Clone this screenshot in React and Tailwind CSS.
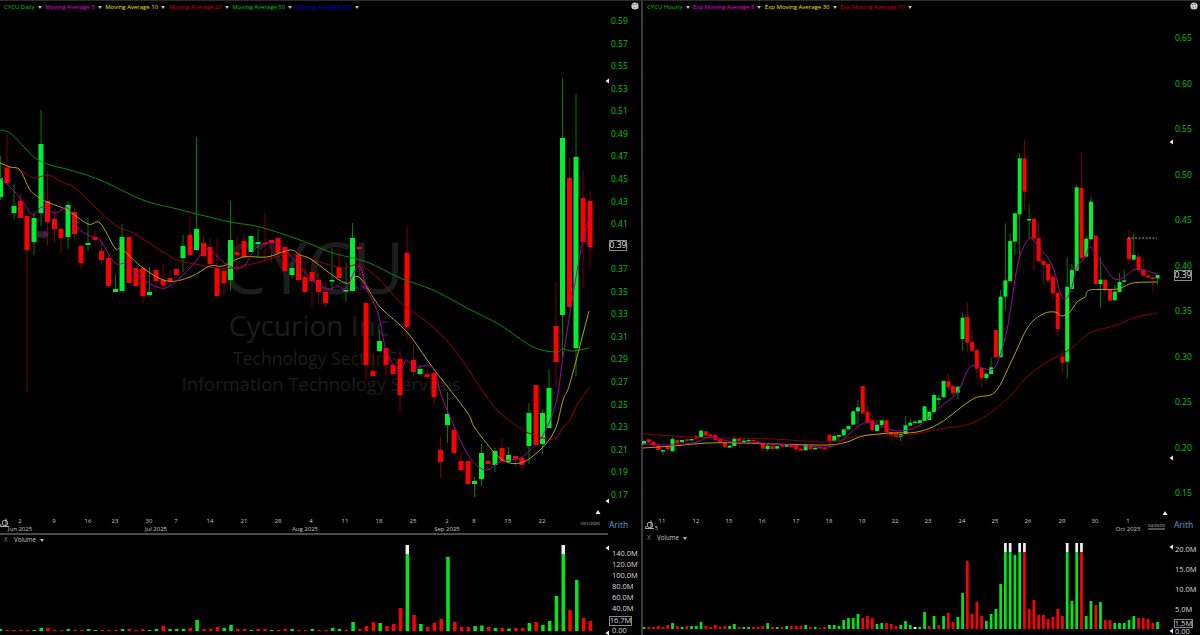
// CYCU daily / hourly chart layout

const UP = "#00f030";
const DOWN = "#ff0000";
const UP_WICK = "#007a00";
const DOWN_WICK = "#7a0000";

// [x, high, bodyTop, bodyBottom, low, colour]
const dailyCandles = [
  [0.5, 156, 178, 197, 200, "g"], [7, 135, 168, 183, 183, "r"], [14, 184, 206, 213, 220, "g"], [20.5, 194, 201, 218, 218, "r"],
  [27, 212, 216, 250, 393, "r"], [34, 212, 218, 242, 255, "g"], [41, 110, 144, 213, 226, "g"], [47.5, 171, 201, 222, 245, "r"],
  [54.5, 210, 219, 229, 243, "r"], [61, 227, 229, 238, 254, "r"], [68, 201, 205, 237, 249, "g"], [74.5, 207, 212, 234, 240, "r"],
  [81, 246, 246, 263, 269, "r"], [88, 218, 243, 245, 251, "g"], [95, 230, 237, 240, 246, "r"], [101.5, 243, 251, 260, 265, "r"],
  [108.5, 253, 258, 286, 286, "r"], [115.5, 274, 289, 292, 292, "g"], [122, 224, 237, 291, 291, "g"], [129, 237, 237, 283, 283, "r"],
  [136, 268, 268, 286, 286, "r"], [143, 267, 268, 296, 303, "r"], [149.5, 267, 292, 295, 295, "g"], [156, 268, 270, 281, 292, "r"],
  [163, 263, 280, 285, 290, "r"], [170, 270, 278, 281, 286, "r"], [176.5, 269, 269, 275, 275, "r"], [183, 235, 246, 258, 272, "g"],
  [190, 214, 235, 255, 255, "r"], [196.5, 137, 229, 250, 250, "g"], [203.5, 235, 243, 256, 257, "r"], [210, 238, 247, 264, 264, "r"],
  [217, 239, 268, 296, 296, "r"], [224, 268, 271, 283, 295, "r"], [230.5, 201, 240, 280, 291, "g"], [237, 236, 252, 255, 267, "r"],
  [244, 233, 241, 257, 257, "r"], [251, 236, 236, 252, 252, "g"], [258, 229, 242, 244, 257, "g"], [265, 213, 243, 244, 262, "r"],
  [271.5, 240, 240, 243, 262, "r"], [278, 237, 238, 253, 253, "r"], [285, 247, 247, 271, 271, "r"], [292, 262, 268, 275, 279, "g"],
  [298.5, 255, 255, 280, 280, "r"], [305, 262, 277, 292, 292, "r"], [312, 263, 272, 281, 307, "r"], [318.5, 273, 280, 292, 303, "r"],
  [325.5, 283, 292, 303, 307, "r"], [332, 248, 280, 281, 290, "g"], [339, 249, 267, 278, 278, "r"], [346, 263, 290, 291, 302, "g"],
  [352.5, 223, 238, 291, 291, "g"], [359, 247, 247, 249, 277, "r"], [366, 303, 303, 365, 382, "r"], [373, 352, 371, 376, 376, "r"],
  [379.5, 330, 341, 351, 351, "g"], [386, 348, 348, 365, 376, "r"], [393, 365, 365, 374, 374, "r"], [400, 350, 359, 395, 413, "r"],
  [407, 227, 253, 327, 340, "r"], [413.5, 345, 360, 372, 377, "r"], [420, 365, 369, 374, 375, "g"], [427, 370, 374, 377, 377, "r"],
  [434, 373, 373, 397, 405, "r"], [440.5, 437, 450, 462, 478, "r"], [447.5, 392, 414, 425, 443, "g"], [454, 427, 430, 453, 453, "r"],
  [461, 452, 461, 470, 472, "r"], [468, 461, 461, 484, 484, "r"], [474.5, 477, 481, 484, 497, "g"], [481.5, 444, 453, 479, 486, "g"],
  [488, 448, 461, 464, 470, "r"], [495, 448, 451, 465, 472, "g"], [502, 439, 448, 461, 462, "r"], [508.5, 447, 455, 462, 462, "g"],
  [515.5, 456, 456, 459, 467, "r"], [522, 457, 458, 465, 470, "r"], [529, 403, 413, 446, 464, "g"], [536, 385, 385, 445, 445, "r"],
  [542.5, 409, 413, 444, 453, "g"], [549, 369, 388, 428, 428, "g"], [556, 282, 326, 362, 387, "r"], [562.5, 78, 138, 315, 358, "g"],
  [569.5, 158, 178, 307, 307, "r"], [576, 94, 157, 348, 376, "g"], [583, 171, 198, 242, 288, "r"], [590, 191, 201, 247, 268, "r"],
];

// hourly bars were read off 3x crops, so each row is [colour, top, bottom, high, low] in crop units
const fromCrop = (base, rows) =>
  rows.map(([c, t, b, h = t, l = b]) => [base + h / 3, base + t / 3, base + b / 3, base + l / 3, c]);

const hourlyRaw = [
  ...fromCrop(330, [
    ["g", 333, 343], ["r", 328, 338], ["r", 335, 347], ["r", 346, 360], ["g", 360, 362, 360, 375], ["r", 350, 358, 345, 370], ["g", 327, 364, 320],
    ["r", 330, 340], ["g", 330, 337], ["r", 328, 332], ["g", 327, 330], ["r", 318, 326], ["g", 302, 322, 297], ["r", 304, 316], ["r", 313, 318],
    ["r", 315, 330, 310], ["r", 328, 336], ["r", 337, 352], ["g", 347, 353], ["g", 326, 348, 318], ["r", 327, 333, 327, 350], ["g", 332, 338, 326],
    ["g", 330, 332, 325], ["r", 330, 334], ["r", 335, 338], ["r", 340, 356, 340, 365], ["g", 347, 357, 342, 365], ["r", 347, 357], ["g", 348, 356],
    ["r", 345, 350], ["g", 342, 350], ["r", 343, 352], ["r", 344, 358, 344, 371], ["r", 356, 362], ["g", 345, 361, 340], ["r", 347, 358], ["g", 353, 358],
    ["r", 351, 355], ["r", 353, 358], ["r", 314, 333, 314, 358], ["g", 318, 332, 312], ["g", 315, 320, 315, 332], ["g", 298, 316], ["g", 288, 298],
    ["g", 244, 284, 240], ["g", 232, 244, 210, 282], ["r", 168, 250], ["r", 245, 277, 225], ["r", 271, 300, 258], ["g", 284, 303, 270], ["g", 271, 285, 271, 295],
    ["r", 271, 307], ["r", 306, 316, 306, 333], ["r", 309, 321], ["g", 312, 320, 312, 333], ["g", 286, 312, 258], ["g", 278, 287, 265], ["g", 275, 279, 270],
    ["g", 271, 279], ["g", 229, 273], ["g", 245, 270], ["g", 195, 247, 188], ["g", 205, 207, 195, 225],
  ]),
  ...fromCrop(130, [
    ["g", 753, 802], ["r", 754, 772, 730, 780], ["r", 768, 790, 768, 800], ["g", 770, 788, 770, 808], ["g", 563, 627, 548, 662], ["r", 561, 638, 518, 665],
    ["r", 636, 662, 598], ["r", 660, 716, 660, 745], ["r", 714, 745, 714, 772], ["g", 731, 744, 731, 752], ["g", 712, 732, 683], ["r", 600, 682], ["g", 500, 682, 480],
    ["g", 451, 500, 280, 540], ["g", 333, 453, 310], ["g", 250, 335, 245, 375], ["g", 85, 253, 70, 375], ["r", 85, 185, 28, 242], ["g", 267, 270, 222, 325],
    ["r", 266, 326, 266, 420], ["r", 324, 393, 275], ["r", 392, 405, 392, 460], ["r", 402, 452], ["r", 440, 490, 440, 510], ["r", 488, 597, 488, 618],
    ["r", 680, 698, 660, 725], ["g", 470, 695, 380, 745], ["g", 420, 477, 403, 487], ["g", 172, 422, 165], ["r", 174, 385, 68], ["g", 326, 380, 318], ["g", 215, 328, 200],
    ["r", 317, 462], ["g", 449, 462, 380, 535], ["r", 449, 480, 449, 490], ["r", 480, 512], ["g", 485, 511, 465], ["g", 456, 486, 430], ["g", 451, 455, 422],
    ["r", 324, 388, 300, 402], ["g", 375, 389, 310], ["r", 380, 420, 370], ["r", 420, 437, 380], ["r", 436, 442, 425], ["r", 442, 447, 442, 485], ["g", 435, 445, 435, 465],
  ]),
];
const hourlyCandles = hourlyRaw.map(([h, t, b, l, c], i) => [644 + i * 4.755, h, t, b, l, c]);

const dailyLines = [
  { color: "#0a8a0a", points: [[0, 130], [10, 133], [25, 148], [35, 158], [50, 165], [70, 170], [100, 180], [143, 200], [173, 208], [197, 214], [230, 222], [260, 227], [300, 240], [333, 253], [367, 262], [400, 278], [433, 290], [467, 308], [500, 325], [533, 347], [556, 352], [563, 349], [573, 351], [589, 348]] },
  { color: "#9a0000", points: [[0, 168], [15, 168], [25, 173], [35, 178], [48, 175], [60, 181], [75, 188], [88, 200], [115, 225], [133, 233], [160, 250], [177, 260], [200, 265], [217, 268], [233, 268], [260, 262], [283, 255], [300, 255], [320, 262], [343, 268], [359, 265], [380, 280], [400, 302], [433, 327], [457, 353], [480, 387], [497, 410], [523, 430], [543, 438], [556, 438], [563, 427], [570, 420], [577, 405], [589, 388]] },
  { color: "#b3a600", points: [[0, 163], [10, 167], [20, 170], [30, 190], [40, 198], [47, 202], [67, 210], [88, 224], [100, 223], [115, 248], [122, 249], [143, 268], [167, 281], [190, 277], [210, 266], [223, 266], [243, 257], [267, 257], [290, 250], [300, 255], [312, 260], [345, 283], [359, 277], [380, 307], [407, 332], [433, 368], [467, 412], [475, 428], [500, 458], [520, 463], [540, 450], [555, 430], [563, 400], [570, 383], [589, 311]] },
  { color: "#a800a8", points: [[0, 178], [15, 192], [23, 202], [33, 215], [42, 207], [55, 213], [68, 208], [77, 227], [90, 236], [100, 240], [115, 263], [128, 263], [140, 277], [157, 287], [170, 286], [190, 268], [203, 252], [210, 250], [227, 265], [243, 267], [257, 247], [277, 243], [297, 263], [312, 280], [327, 289], [338, 286], [346, 288], [359, 266], [367, 290], [378, 313], [387, 353], [400, 370], [406, 360], [415, 367], [433, 368], [443, 400], [467, 453], [485, 470], [500, 462], [520, 458], [530, 450], [542, 437], [556, 403], [563, 357], [575, 283], [583, 240], [589, 217]] },
];

const hourlyLines = [
  { color: "#8a0000", points: [[643, 434], [690, 437], [723, 438], [773, 439], [827, 442], [853, 437], [873, 435], [907, 435], [940, 429], [975, 422], [1007, 399], [1027, 377], [1047, 362], [1062, 354], [1073, 347], [1090, 333], [1117, 325], [1133, 318], [1157, 313]] },
  { color: "#b3a600", points: [[643, 448], [673, 446], [707, 443], [740, 443], [773, 444], [827, 445], [847, 442], [863, 436], [890, 433], [917, 432], [940, 423], [973, 399], [995, 392], [1012, 360], [1028, 327], [1043, 314], [1055, 312], [1062, 316], [1070, 312], [1077, 302], [1085, 297], [1090, 290], [1117, 289], [1133, 283], [1157, 282]] },
  { color: "#a800a8", points: [[643, 444], [673, 445], [697, 442], [710, 437], [733, 442], [760, 443], [790, 445], [827, 447], [840, 442], [860, 425], [873, 423], [897, 431], [920, 425], [940, 407], [957, 393], [970, 367], [983, 368], [995, 367], [1007, 330], [1018, 263], [1028, 240], [1035, 242], [1052, 265], [1062, 297], [1070, 293], [1077, 267], [1085, 258], [1090, 247], [1100, 260], [1113, 278], [1123, 278], [1133, 270], [1143, 270], [1157, 274]] },
];

const dailyVolume =
  "g2 r1 r1 r1 r1 g1 g3 r3 r1 r1 g2 r1 r1 g2 g1 r1 r1 r1 g2 r2 r1 r2 g1 g2 r5 g2 g2 g2 r3 g11 r2 r2 r4 g3 g6 r2 r2 g1 r2 r2 g1 r1 r2 g2 r1 r1 g2 r1 r1 " +
  "g3 g2 r1 g9 r2 r5 r9 g8 r5 r7 r23 G r16 g7 r4 r8 r12 g74 r9 r4 r4 g5 g5.5 r4 g3 r3 g2.5 r3 r3 g8 r9 g6 g10 g35 G r21 g51 r13 r10";

const hourlyVolume =
  "g2 r2 r2 r3 r2 r4 g6 r3 g2 r3 g3 g3 g7 r3 r2 r4 r2 r3 g3 g5 r2 g2 g2 r2 r2 r3 g6 r2 g2 r2 g3 r3 r3 r3 g4 r2 g2 r1 r2 g4 g4 g3 g9 g11 g11 g15 r11 r13 r11 g5 g6 r6 r5 r3 g4 g8 g4 w2 g2 " +
  "g17 r3 g13 r4 g13 r16 r7 g12 g36 r68 r15 r27 r13 g8 g15 g20 g45 G G g74 G R r20 r29 r14 r14 r10 r12 r20 r13 G g28 G R g13 g28 r24 g27 r9 r9 g6 g6 g6 g9 g13 r11 r11 r10 r6 g7";

const dailyDates = [
  [20, "2", "Jun 2025"], [54, "9"], [88, "16"], [115, "23"], [149, "30", "Jul 2025", 156], [176, "7"], [210, "14"], [244, "21"], [278, "28"],
  [311, "4", "Aug 2025", 305], [345, "11"], [379, "18"], [413, "25"], [447, "2", "Sep 2025"], [474, "8"], [508, "15"], [542, "22"],
];
const hourlyDates = [
  [662, "11"], [696, "12"], [729, "15"], [762, "16"], [796, "17"], [829, "18"], [862, "19"], [895, "22"], [928, "23"], [962, "24"], [995, "25"],
  [1028, "26"], [1062, "29"], [1095, "30"], [1128, "1", "Oct 2025"],
];

const dailyPrices = ["0.59", "0.57", "0.55", "0.53", "0.51", "0.49", "0.47", "0.45", "0.43", "0.41", "0.39", "0.37", "0.35", "0.33", "0.31", "0.29", "0.27", "0.25", "0.23", "0.21", "0.19", "0.17"];
const hourlyPrices = ["0.65", "0.60", "0.55", "0.50", "0.45", "0.40", "0.35", "0.30", "0.25", "0.20", "0.15"];

// catmull-rom through the measured points so the averages stay curved
function smooth(points) {
  let d = `M${points[0][0]} ${points[0][1]}`;
  for (let i = 0; i < points.length - 1; i++) {
    const p0 = points[i - 1] || points[i];
    const p1 = points[i];
    const p2 = points[i + 1];
    const p3 = points[i + 2] || p2;
    const c1x = p1[0] + (p2[0] - p0[0]) / 6;
    const c1y = p1[1] + (p2[1] - p0[1]) / 6;
    const c2x = p2[0] - (p3[0] - p1[0]) / 6;
    const c2y = p2[1] - (p3[1] - p1[1]) / 6;
    d += `C${c1x} ${c1y} ${c2x} ${c2y} ${p2[0]} ${p2[1]}`;
  }
  return d;
}

function Candles({ data, width }) {
  return data.map(([x, high, top, bottom, low, c], i) => (
    <g key={i}>
      <line x1={x} x2={x} y1={high} y2={low} stroke={c === "g" ? UP_WICK : DOWN_WICK} strokeWidth="1" />
      <rect x={x - width / 2} y={top} width={width} height={Math.max(bottom - top, 1.5)} fill={c === "g" ? UP : DOWN} />
    </g>
  ));
}

function Lines({ lines }) {
  return lines.map((l) => <path key={l.color} d={smooth(l.points)} fill="none" stroke={l.color} strokeWidth="1" />);
}

function DateAxis({ dates }) {
  return dates.map(([x, day, month, monthX]) => (
    <g key={x} fill="#c8c8c8" fontSize="6" textAnchor="middle">
      <text x={x} y={522.5}>{day}</text>
      {month && <text x={monthX || x} y={530.5}>{month}</text>}
    </g>
  ));
}

function Arrow({ x, y, up }) {
  const points = up ? `${x},${y - 2} ${x - 2.5},${y + 2} ${x + 2.5},${y + 2}` : `${x - 2.5},${y} ${x + 1},${y - 2.5} ${x + 1},${y + 2.5}`;
  return <polygon points={points} fill="#e8e8e8" />;
}

function SyncIcon({ x, y, count }) {
  return (
    <g fill="none" stroke="#d8d8d8" strokeWidth="0.8">
      <circle cx={x} cy={y} r="2.8" />
      <path d={`M${x - 4} ${y + 1}L${x - 4.5} ${y + 3.5}L${x + 4} ${y + 3.5}`} />
      <path d={`M${x + 1} ${y - 4.5}L${x + 1} ${y + 2}`} />
      {count && <text x={x + 5} y={y + 4.5} fontSize="5" fill="#d8d8d8" stroke="none">{count}</text>}
    </g>
  );
}

function Caret() {
  return <span className="inline-block h-0 w-0 border-x-[2px] border-t-[3px] border-x-transparent border-t-[#b8b8b8]" />;
}

function Legend({ items }) {
  return (
    <div className="absolute left-[4px] top-[1px] z-20 flex h-[10px] items-center gap-[3.5px] text-[6px] leading-none whitespace-nowrap">
      {items.map(([label, color]) => (
        <span key={label} className="flex items-center gap-[3px]">
          <span style={{ color }}>{label}</span>
          <Caret />
        </span>
      ))}
    </div>
  );
}

function Palette() {
  return (
    <svg className="absolute right-[2px] top-[1px]" width="8" height="8" viewBox="0 0 8 8">
      <circle cx="4" cy="4" r="3.6" fill="#d4d4d4" />
      <circle cx="2.5" cy="2.6" r="0.9" fill="#d63b3b" />
      <circle cx="5.2" cy="2.2" r="0.9" fill="#3b82d6" />
      <circle cx="6" cy="4.6" r="0.9" fill="#d6b23b" />
      <circle cx="3.4" cy="5.6" r="0.9" fill="#3bb04a" />
    </svg>
  );
}

function Tag({ value, className }) {
  return (
    <span className={`absolute z-10 flex h-[11px] items-center justify-center border border-[#8a8a8a] bg-black text-[8.5px] leading-none text-[#e4e4e4] ${className}`}>
      {value}
    </span>
  );
}

function VolumeBars({ data, start, step, width }) {
  const base = 631;
  return data.split(" ").map((item, i) => {
    const x = start + i * step - width / 2;
    const kind = item[0];
    if (kind === "G" || kind === "R") {
      return (
        <g key={i}>
          <rect x={x} y={545} width={width} height={9} fill="#f2f2f2" />
          <rect x={x} y={554} width={width} height={base - 554} fill={kind === "G" ? "#00e81c" : DOWN} />
        </g>
      );
    }
    const h = parseFloat(item.slice(1));
    const fill = kind === "g" ? "#00e81c" : kind === "w" ? "#f2f2f2" : DOWN;
    return <rect key={i} x={x} y={base - h} width={width} height={h} fill={fill} />;
  });
}

function VolumeHeader() {
  return (
    <div className="absolute left-[4px] top-[1px] flex h-[9px] items-center text-[6.2px] leading-none text-[#c8c8c8]">
      <span className="w-[10px] text-[#8c8c8c]">X</span>
      <span>Volume</span>
      <span className="ml-[4px] flex"><Caret /></span>
    </div>
  );
}

export default function App() {
  return (
    <div className="flex h-[635px] w-[1200px] overflow-hidden border-t border-[#2c2c2c] bg-black font-['Open_Sans',sans-serif]">
      {/* daily */}
      <section className="flex w-[641px] flex-col">
        <div className="flex h-[532px]">
          <div className="relative w-[608px]">
            <Legend
              items={[
                ["CYCU Daily", "#00c814"],
                ["Moving Average 5", "#e000e0"],
                ["Moving Average 10", "#e6e600"],
                ["Moving Average 20", "#d00000"],
                ["Moving Average 50", "#00c814"],
                ["Moving Average 200", "#0000e0"],
              ]}
            />
            <div className="absolute inset-x-0 top-[235px] flex flex-col items-center whitespace-nowrap text-[#1d1d1d]">
              <span className="ml-[18px] text-[72px] leading-[60px]">CYCU</span>
              <span className="ml-[10px] mt-[10px] text-[28px] leading-[38px]">Cycurion Inc</span>
              <span className="ml-[28px] text-[17.6px] leading-[28px]">Technology Sector(S)</span>
              <span className="ml-[34px] text-[18.4px] leading-[24px]">Information Technology Services</span>
            </div>
            <svg className="relative overflow-visible" width="608" height="532" viewBox="0 1 608 532">
              <Candles data={dailyCandles} width={5} />
              <Lines lines={dailyLines} />
              <rect x="37" y="231" width="10" height="7" rx="1" fill="#242424" />
              <text x="37.5" y="236" fontSize="5" fill="#c000c0">L-.56</text>
              <text x="355" y="290" fontSize="5" fill="#c000c0">+.15</text>
              <DateAxis dates={dailyDates} />
              <text x="580" y="525" fontSize="4.2" fill="#c8c8c8">10/1/2025</text>
              <Arrow x={598} y={512} up />
              <Arrow x={608} y={81} />
              <Arrow x={608} y={501} />
              <SyncIcon x={5} y={523} />
            </svg>
          </div>
          <div className="relative flex flex-1 flex-col">
            <Palette />
            <Tag value="0.39" className="left-[1px] top-[239px] w-[18px]" />
            <div className="flex flex-1 flex-col justify-between pb-[18px] pl-[3px] pt-[14px] text-[8.5px] leading-[12px] text-[#00c800]">
              {dailyPrices.map((p) => <span key={p}>{p}</span>)}
            </div>
            <span className="mb-[2px] pl-[1px] text-[8.5px] leading-[12px] text-[#5aa0d8]">Arith</span>
          </div>
        </div>
        <div className="h-[2px] w-[608px] bg-[#4a4a4a]" />
        <div className="flex flex-1">
          <div className="relative w-[608px]">
            <VolumeHeader />
            <svg className="overflow-visible" width="608" height="100" viewBox="0 535 608 100">
              <VolumeBars data={dailyVolume} start={0.5} step={6.78} width={3.5} />
              <Arrow x={608} y={548} />
              <Arrow x={608} y={633} />
            </svg>
          </div>
          <div className="flex flex-1 flex-col items-start pl-[1px] pt-[13px] text-[7.5px] text-[#dcdcdc]">
            {["140.0M", "120.0M", "100.0M", "80.0M", "60.0M", "40.0M"].map((v) => (
              <span key={v} className="pl-[3px] leading-[11px]">{v}</span>
            ))}
            <span className="relative mt-[2px] flex h-[10px] w-[23px] items-center justify-center border border-[#8a8a8a] leading-none">16.7M</span>
            <span className="pl-[3px] leading-[9px]">0.00</span>
          </div>
        </div>
      </section>

      <div className="w-[2px] bg-[#3c3c3c]" />

      {/* hourly */}
      <section className="flex flex-1 flex-col">
        <div className="flex h-[532px]">
          <div className="relative w-[530px]">
            <Legend
              items={[
                ["CYCU Hourly", "#00c814"],
                ["Exp Moving Average 8", "#e000e0"],
                ["Exp Moving Average 30", "#e6e600"],
                ["Exp Moving Average 60", "#d00000"],
              ]}
            />
            <svg className="overflow-visible" width="530" height="532" viewBox="643 1 530 532">
              <Candles data={hourlyCandles} width={4} />
              <Lines lines={hourlyLines} />
              <line x1="1128" x2="1157" y1="238" y2="238" stroke="#c8c8c8" strokeWidth="0.8" strokeDasharray="2 1.5" />
              <DateAxis dates={hourlyDates} />
              <text x="1148" y="527" fontSize="4.3" fill="#c8c8c8">04:00:00</text>
              <line x1="1148" x2="1165" y1="529" y2="529" stroke="#c8c8c8" strokeWidth="0.8" />
              <Arrow x={1165} y={513} up />
              <Arrow x={1172} y={142} />
              <Arrow x={1172} y={458} />
              <SyncIcon x={650} y={525} count="5" />
            </svg>
          </div>
          <div className="relative flex flex-1 flex-col">
            <Palette />
            <Tag value="0.39" className="left-[1px] top-[269px] w-[18px]" />
            <div className="flex flex-1 flex-col justify-between pb-[20px] pl-[2px] pt-[31px] text-[8.5px] leading-[12px] text-[#00c800]">
              {hourlyPrices.map((p) => <span key={p}>{p}</span>)}
            </div>
            <span className="mb-[2px] pl-[1px] text-[8.5px] leading-[12px] text-[#5aa0d8]">Arith</span>
          </div>
        </div>
        <div className="h-[2px] w-[530px] bg-[#4a4a4a]" />
        <div className="flex flex-1">
          <div className="relative w-[530px]">
            <VolumeHeader />
            <svg className="overflow-visible" width="530" height="100" viewBox="643 535 530 100">
              <VolumeBars data={hourlyVolume} start={644} step={4.755} width={2.7} />
              <Arrow x={1172} y={549} />
              <Arrow x={1172} y={633} />
            </svg>
          </div>
          <div className="flex flex-1 flex-col items-start pl-[1px] pt-[6px] text-[7.5px] text-[#dcdcdc]">
            {["20.0M", "15.0M", "10.0M", "5.0M"].map((v) => (
              <span key={v} className="pl-[1px] leading-[20px]">{v}</span>
            ))}
            <span className="relative flex h-[9px] w-[19px] items-center justify-center border border-[#8a8a8a] leading-none">1.5M</span>
            <span className="-mt-[1px] pl-[1px] leading-[8px]">0.00</span>
          </div>
        </div>
      </section>
    </div>
  );
}
